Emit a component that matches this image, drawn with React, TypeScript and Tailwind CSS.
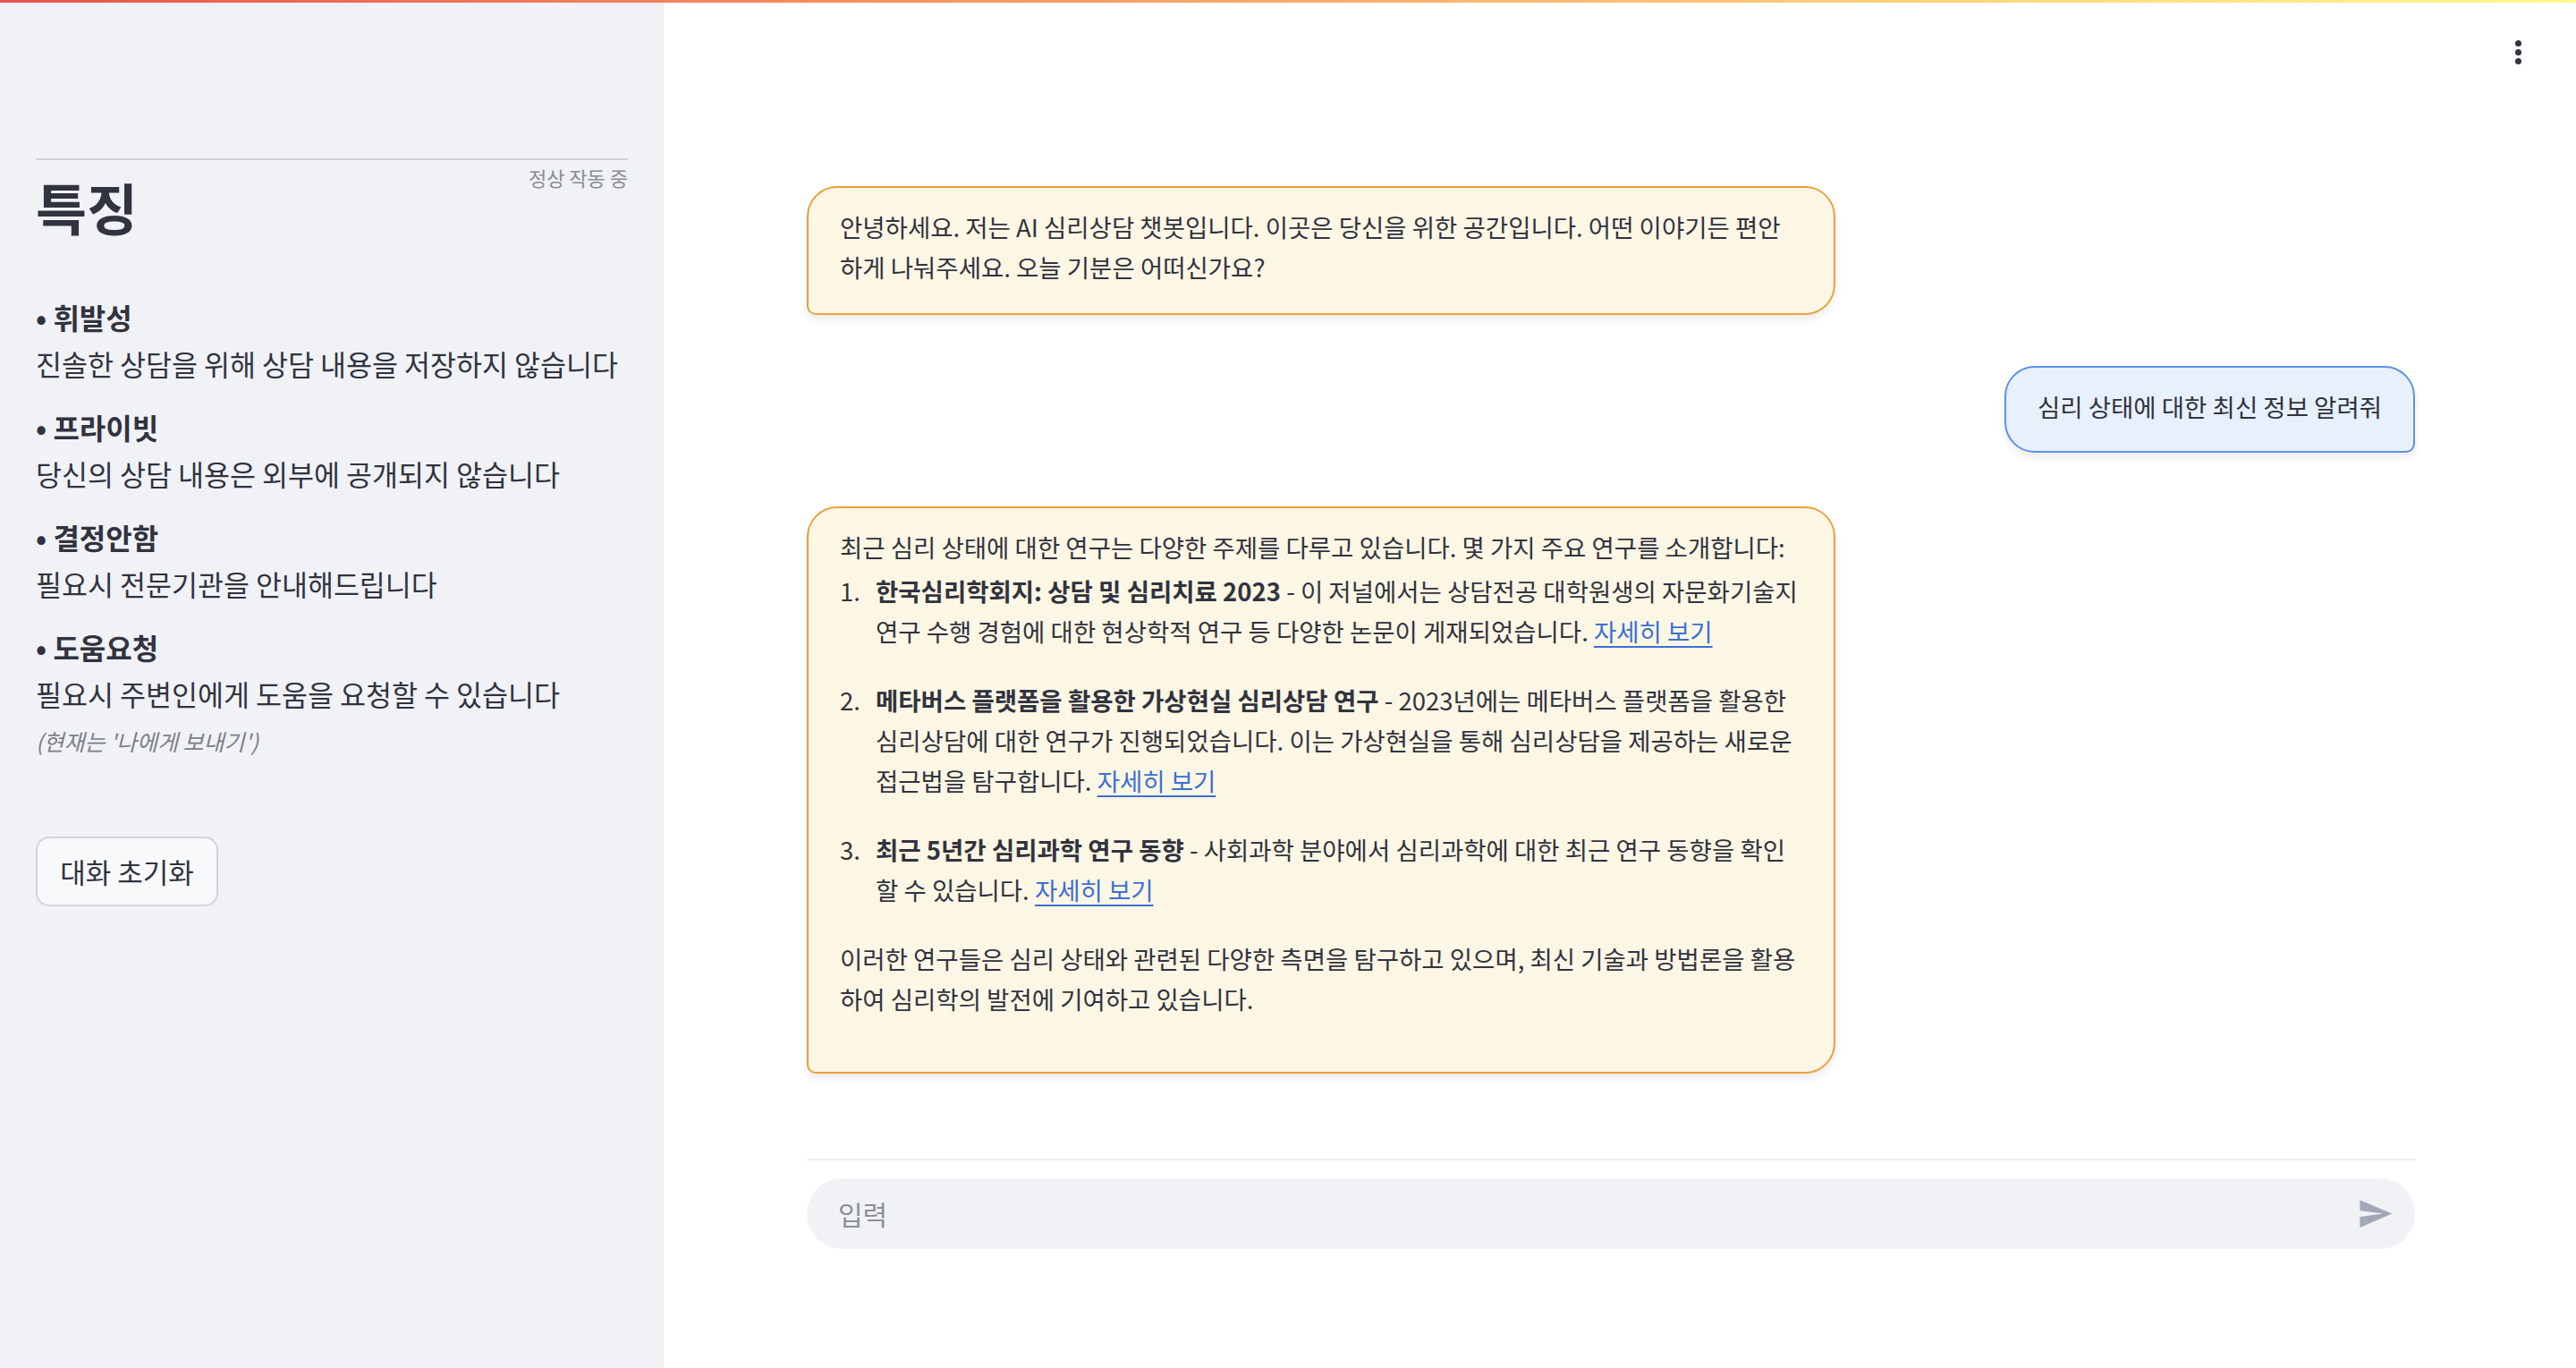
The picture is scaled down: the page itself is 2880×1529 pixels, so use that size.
import React from 'react';

const features = [
  { title: '휘발성', text: '진솔한 상담을 위해 상담 내용을 저장하지 않습니다' },
  { title: '프라이빗', text: '당신의 상담 내용은 외부에 공개되지 않습니다' },
  { title: '결정안함', text: '필요시 전문기관을 안내해드립니다' },
  { title: '도움요청', text: '필요시 주변인에게 도움을 요청할 수 있습니다' },
];

const studies = [
  {
    title: '한국심리학회지: 상담 및 심리치료 2023',
    text: ' - 이 저널에서는 상담전공 대학원생의 자문화기술지 연구 수행 경험에 대한 현상학적 연구 등 다양한 논문이 게재되었습니다. ',
  },
  {
    title: '메타버스 플랫폼을 활용한 가상현실 심리상담 연구',
    text: ' - 2023년에는 메타버스 플랫폼을 활용한 심리상담에 대한 연구가 진행되었습니다. 이는 가상현실을 통해 심리상담을 제공하는 새로운 접근법을 탐구합니다. ',
  },
  {
    title: '최근 5년간 심리과학 연구 동향',
    text: ' - 사회과학 분야에서 심리과학에 대한 최근 연구 동향을 확인할 수 있습니다. ',
  },
];

const Link = () => (
  <a href="#" className="text-[#3c6fd6] underline underline-offset-[5px] decoration-[2px]">
    자세히 보기
  </a>
);

const Sidebar = () => (
  <aside className="w-[742px] shrink-0 bg-[#f0f2f6] px-[40px] pt-[177px]">
    <div className="h-[2px] bg-[#cfd1d6]" />
    <div className="flex justify-end pt-[4px]">
      <span className="text-[22px] leading-[30px] text-[#8a8c94]">정상 작동 중</span>
    </div>
    <h1 className="-mt-[27px] text-[62px] leading-[90px] font-bold text-[#31333f]">특징</h1>
    <div className="mt-[55px]">
      {features.map((f) => (
        <div key={f.title} className="mb-[24px] last:mb-0">
          <div className="text-[32px] leading-[47px] font-bold text-[#31333f]">• {f.title}</div>
          <div className="mt-[5px] text-[31.5px] leading-[47px] text-[#31333f]">{f.text}</div>
        </div>
      ))}
    </div>
    <div className="mt-[10px] text-[25px] leading-[38px] italic text-[#7d7f88]">(현재는 '나에게 보내기')</div>
    <button className="mt-[88px] h-[78px] w-[204px] rounded-[15px] border-2 border-[#d3d5db] bg-[#f8f9fb] text-[31px] text-[#31333f]">
      대화 초기화
    </button>
  </aside>
);

const BotBubble = ({ children }: { children: React.ReactNode }) => (
  <div className="w-[1150px] rounded-[34px] rounded-bl-[10px] border-2 border-[#e8a23c] bg-[#fcf6e4] px-[35px] pt-[21px] pb-[29px] text-[#31333f] shadow-[0_5px_10px_rgba(0,0,0,0.08)]">
    {children}
  </div>
);

export default function App() {
  return (
    <div
      className="relative flex h-[1529px] w-[2880px] overflow-hidden bg-white text-[#31333f]"
      style={{ fontFamily: '"Noto Sans CJK KR", "Noto Sans", sans-serif' }}
    >
      <div className="absolute left-0 right-0 top-0 h-[3px] bg-gradient-to-r from-[#e8534f] to-[#fdfa8c]" />
      <Sidebar />

      <main className="relative flex-1 pl-[160px] pr-[180px] pt-[208px]">
        <button className="absolute right-[61px] top-[45px] flex flex-col gap-[3px]">
          <span className="h-[7px] w-[7px] rounded-full bg-[#31333f]" />
          <span className="h-[7px] w-[7px] rounded-full bg-[#31333f]" />
          <span className="h-[7px] w-[7px] rounded-full bg-[#31333f]" />
        </button>

        <div className="flex flex-col text-[27.5px] leading-[45px]">
          <BotBubble>
            <p>안녕하세요. 저는 AI 심리상담 챗봇입니다. 이곳은 당신을 위한 공간입니다. 어떤 이야기든 편안하게 나눠주세요. 오늘 기분은 어떠신가요?</p>
          </BotBubble>

          <div className="mt-[57px] flex justify-end">
            <div className="rounded-[34px] rounded-br-[10px] border-2 border-[#5b93e6] bg-[#e7f0fb] px-[35px] pt-[21px] pb-[27px] shadow-[0_5px_10px_rgba(0,0,0,0.08)]">
              심리 상태에 대한 최신 정보 알려줘
            </div>
          </div>

          <div className="mt-[60px]">
            <BotBubble>
              <p className="mb-[4px]">최근 심리 상태에 대한 연구는 다양한 주제를 다루고 있습니다. 몇 가지 주요 연구를 소개합니다:</p>
              <ol>
                {studies.map((s, i) => (
                  <li key={s.title} className="mb-[32px] flex">
                    <span className="w-[40px] shrink-0 pr-[18px] text-right">{i + 1}.</span>
                    <div className="flex-1">
                      <b>{s.title}</b>
                      {s.text}
                      <Link />
                    </div>
                  </li>
                ))}
              </ol>
              <p className="mb-[30px]">이러한 연구들은 심리 상태와 관련된 다양한 측면을 탐구하고 있으며, 최신 기술과 방법론을 활용하여 심리학의 발전에 기여하고 있습니다.</p>
            </BotBubble>
          </div>
        </div>

        <div className="absolute bottom-[133px] left-[160px] right-[180px]">
          <div className="h-[2px] bg-[#eeeff2]" />
          <div className="mt-[20px] flex h-[79px] items-center rounded-full bg-[#f0f2f6] pl-[35px] pr-[24px]">
            <span className="flex-1 text-[30px] text-[#8c8e97]">입력</span>
            <svg width="41" height="41" viewBox="0 0 24 24" fill="#a3a8b8">
              <path d="M2.01 21L23 12 2.01 3 2 10l15 2-15 2z" />
            </svg>
          </div>
        </div>
      </main>
    </div>
  );
}
